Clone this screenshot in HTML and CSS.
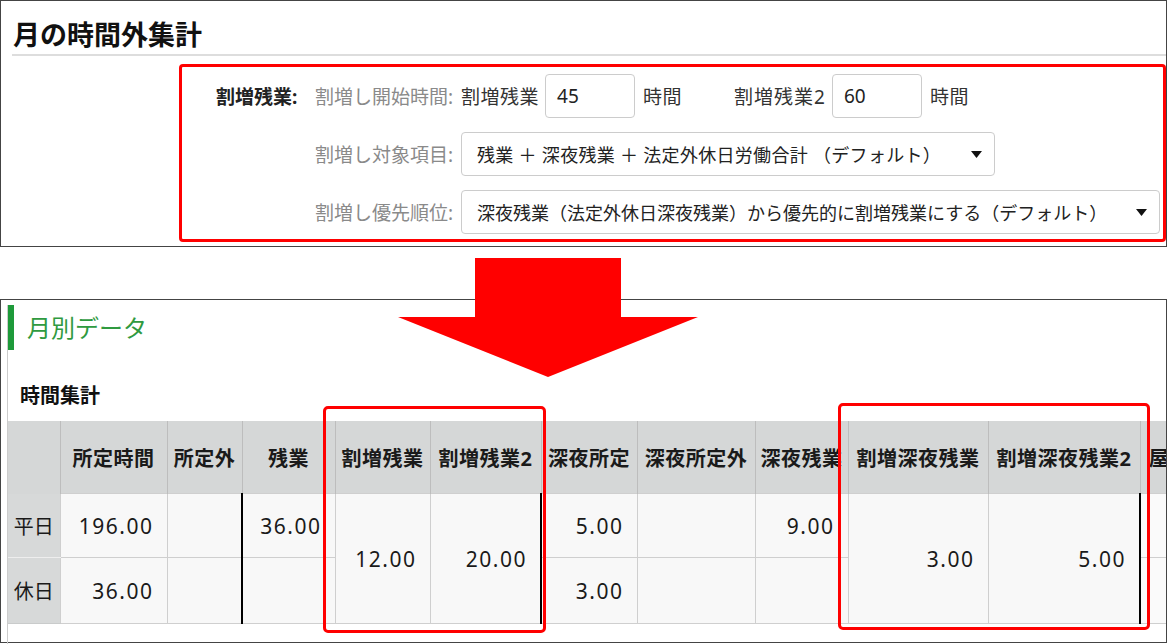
FILE: index.html
```html
<!DOCTYPE html>
<html lang="ja">
<head>
	<meta charset="utf-8">
	<title>月の時間外集計</title>
	<link rel="stylesheet" href="styles.css">
</head>
<body>

<div class="page">

	<!-- settings panel -->
	<section class="panel panel-top">
		<h1 class="title">月の時間外集計</h1>

		<div class="form-box">
			<div class="lbl-main">割増残業:</div>
			<div class="lbl">割増し開始時間:</div>
			<div class="field-row">
				<span class="txt">割増残業</span>
				<div class="num-input">45</div>
				<span class="txt">時間</span>
				<span class="txt group-2">割増残業2</span>
				<div class="num-input">60</div>
				<span class="txt">時間</span>
			</div>

			<div></div>
			<div class="lbl">割増し対象項目:</div>
			<div class="select select-short">
				<span>残業 ＋ 深夜残業 ＋ 法定外休日労働合計 （デフォルト）</span>
				<svg class="caret" width="11" height="7" viewBox="0 0 11 7"><polygon points="0,0 11,0 5.5,7" /></svg>
			</div>

			<div></div>
			<div class="lbl">割増し優先順位:</div>
			<div class="select select-long">
				<span>深夜残業（法定外休日深夜残業）から優先的に割増残業にする（デフォルト）</span>
				<svg class="caret" width="11" height="7" viewBox="0 0 11 7"><polygon points="0,0 11,0 5.5,7" /></svg>
			</div>
		</div>
	</section>

	<!-- arrow between the two panels -->
	<svg class="arrow" width="300" height="119" viewBox="0 0 300 119">
		<polygon points="77,0 223,0 223,59 300,59 150,119 0,59 77,59" />
	</svg>

	<!-- monthly data panel -->
	<section class="panel panel-bottom">
		<div class="inner">
			<h2 class="section-head">月別データ</h2>
			<h3 class="sub-head">時間集計</h3>

			<div class="table-wrap">
				<table class="sum-table">
					<colgroup>
						<col style="width:52px">
						<col style="width:107px">
						<col style="width:75px">
						<col style="width:93px">
						<col style="width:95px">
						<col style="width:111px">
						<col style="width:96px">
						<col style="width:118px">
						<col style="width:93px">
						<col style="width:140px">
						<col style="width:152px">
						<col style="width:90px">
					</colgroup>
					<thead>
						<tr>
							<th class="row-lbl"></th>
							<th>所定時間</th>
							<th>所定外</th>
							<th>残業</th>
							<th>割増残業</th>
							<th>割増残業2</th>
							<th>深夜所定</th>
							<th>深夜所定外</th>
							<th>深夜残業</th>
							<th>割増深夜残業</th>
							<th>割増深夜残業2</th>
							<th class="cut">屋外労働</th>
						</tr>
					</thead>
					<tbody>
						<tr class="r1">
							<td class="row-lbl">平日</td>
							<td>196.00</td>
							<td></td>
							<td class="bar-l">36.00</td>
							<td rowspan="2">12.00</td>
							<td rowspan="2">20.00</td>
							<td class="bar-l">5.00</td>
							<td></td>
							<td>9.00</td>
							<td rowspan="2">3.00</td>
							<td rowspan="2" class="bar-r">5.00</td>
							<td class="blank"></td>
						</tr>
						<tr class="r2">
							<td class="row-lbl">休日</td>
							<td>36.00</td>
							<td></td>
							<td class="bar-l"></td>
							<td class="bar-l">3.00</td>
							<td></td>
							<td></td>
							<td class="blank"></td>
						</tr>
					</tbody>
				</table>
			</div>
		</div>

		<div class="mark mark-a"></div>
		<div class="mark mark-b"></div>
	</section>

</div>

</body>
</html>
```

FILE: styles.css
```css
body {
	margin: 0;
	background: #fff;
	color: #222;
	font-family: "Noto Sans", "Noto Sans CJK JP", sans-serif;
}

.page {
	position: relative;
	width: 1169px;
	height: 644px;
}

.panel {
	box-sizing: border-box;
	width: 1167px;
	border: 1px solid #444;
	background: #fff;
}

/* ---- top panel ---- */

.panel-top {
	padding-top: 18px;
	padding-bottom: 4px;
}

.title {
	margin: 0 0 0 11px;
	padding: 0 0 4px 1px;
	font-size: 27px;
	line-height: 31px;
	font-weight: 700;
	color: #111;
	border-bottom: 2px solid #ddd;
}

.form-box {
	margin: 8px 0 0 178px;
	padding: 7px 3px 5px 34px;
	border: 3px solid #f00;
	border-radius: 4px;
	display: grid;
	grid-template-columns: 89px 140px 1fr;
	column-gap: 8px;
	row-gap: 14px;
	align-items: center;
	font-size: 19px;
}

.lbl-main {
	font-weight: 700;
	color: #222;
	white-space: nowrap;
}

.lbl {
	justify-self: end;
	color: #8a8a8a;
	white-space: nowrap;
}

.field-row {
	display: flex;
	align-items: center;
	gap: 8px;
}

.txt {
	color: #333;
	white-space: nowrap;
	letter-spacing: 0.5px;
}

.field-row .txt:first-child {
	margin-right: -2px;
}

.group-2 {
	margin-left: 44px;
	margin-right: -2px;
	letter-spacing: 1px;
}

.num-input {
	box-sizing: border-box;
	width: 90px;
	height: 44px;
	padding-left: 11px;
	border: 1px solid #ccc;
	border-radius: 4px;
	line-height: 42px;
	color: #222;
}

.select {
	box-sizing: border-box;
	height: 44px;
	padding: 0 12px 0 15px;
	border: 1px solid #ccc;
	border-radius: 4px;
	display: flex;
	align-items: center;
	justify-content: space-between;
	font-size: 18px;
	color: #222;
	white-space: nowrap;
}

.select-short {
	width: 534px;
	letter-spacing: 0.3px;
}

.select-long {
	width: 699px;
}

.caret {
	fill: #111;
}

/* ---- arrow ---- */

.arrow {
	position: absolute;
	left: 398px;
	top: 258px;
	z-index: 2;
	fill: #f00;
}

/* ---- bottom panel ---- */

.panel-bottom {
	position: relative;
	margin-top: 52px;
	height: 344px;
	padding-left: 6px;
}

.inner {
	height: 100%;
	border-left: 1px solid #ccc;
}

.section-head {
	margin: 5px 0 0;
	height: 45px;
	padding-left: 13px;
	border-left: 6px solid #1e9a3a;
	font-size: 24px;
	line-height: 45px;
	font-weight: 400;
	color: #2f9a40;
}

.sub-head {
	margin: 32px 0 0 12px;
	font-size: 20px;
	line-height: 28px;
	font-weight: 700;
	color: #111;
}

.table-wrap {
	margin-top: 11px;
	overflow: hidden;
	width: 1158px;
}

.sum-table {
	table-layout: fixed;
	border-collapse: collapse;
	width: 1222px;
	font-size: 21px;
	color: #1a1a1a;
}

.sum-table th {
	height: 72px;
	padding: 0;
	background: #d5d7d7;
	border-left: 1px solid #bdbdbd;
	font-size: 20px;
	letter-spacing: 0.5px;
	font-weight: 700;
	text-align: center;
	white-space: nowrap;
	overflow: hidden;
}

.sum-table th.row-lbl {
	border-left: none;
}

.sum-table th.cut {
	text-align: left;
	padding-left: 8px;
}

.sum-table td {
	padding: 0 13px 0 0;
	background: #f8f8f8;
	border: 1px solid #cfcfcf;
	text-align: right;
	letter-spacing: 1.5px;
	white-space: nowrap;
}

.sum-table tr.r1 td {
	height: 63px;
}

.sum-table tr.r2 td {
	height: 65px;
}

.sum-table td.row-lbl {
	padding: 0;
	background: #d7d9d9;
	border: none;
	border-bottom: 1px solid #c9cbcb;
	text-align: center;
	font-size: 20px;
	letter-spacing: 0;
}

.sum-table tr.r1 td.row-lbl {
	border-bottom: 1px solid #eee;
}

.sum-table td.bar-l {
	border-left: 2px solid #000;
}

.sum-table td.bar-r {
	border-right: 2px solid #000;
}

.sum-table td.blank {
	background: #fafafa;
	border-right: none;
}

/* red frames over the table */

.mark {
	position: absolute;
	box-sizing: border-box;
	border: 3px solid #f00;
	border-radius: 5px;
	z-index: 1;
}

.mark-a {
	left: 322px;
	top: 106px;
	width: 223px;
	height: 227px;
}

.mark-b {
	left: 837px;
	top: 103px;
	width: 312px;
	height: 227px;
}
```
